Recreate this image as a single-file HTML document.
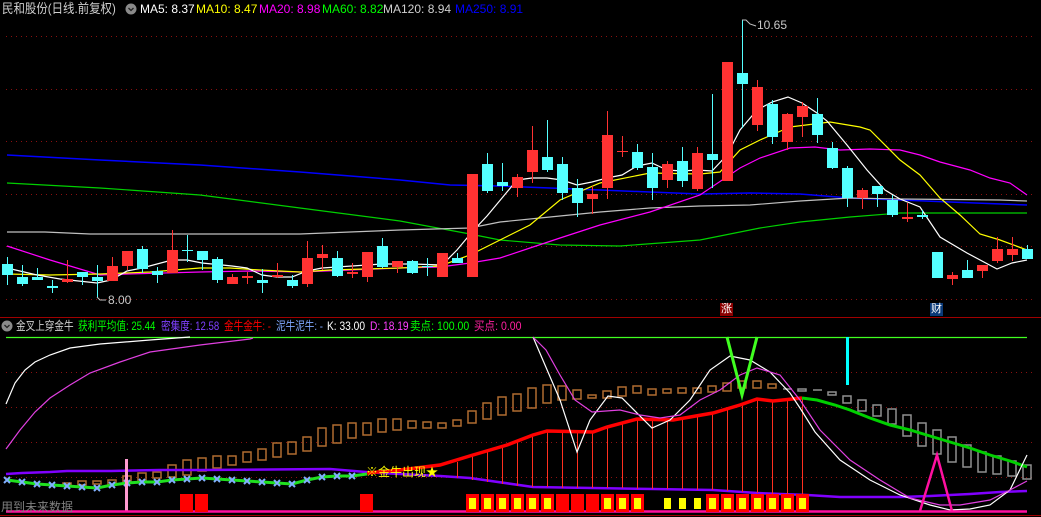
<!DOCTYPE html>
<html><head><meta charset="utf-8"><style>
html,body{margin:0;padding:0;background:#000;width:1041px;height:517px;overflow:hidden}
.t{position:absolute;font-family:"Liberation Sans","Noto Sans CJK SC",sans-serif;font-size:12px;line-height:14px;white-space:nowrap;transform-origin:0 0}
.s{transform:scaleX(0.8)}
</style></head><body>
<svg width="1041" height="517" style="position:absolute;left:0;top:0" xmlns="http://www.w3.org/2000/svg">
<g stroke="#8a1010" stroke-width="1" stroke-dasharray="1,4">
<line x1="6" y1="36.5" x2="1035" y2="36.5"/><line x1="6" y1="89.5" x2="1035" y2="89.5"/>
<line x1="6" y1="141.5" x2="1035" y2="141.5"/><line x1="6" y1="194.5" x2="1035" y2="194.5"/>
<line x1="6" y1="246.5" x2="1035" y2="246.5"/><line x1="6" y1="299.5" x2="1035" y2="299.5"/>
<line x1="6" y1="372.5" x2="1035" y2="372.5"/><line x1="6" y1="407.5" x2="1035" y2="407.5"/>
<line x1="6" y1="442.5" x2="1035" y2="442.5"/><line x1="6" y1="477.5" x2="1035" y2="477.5"/>
</g>
<line x1="0" y1="317.5" x2="1041" y2="317.5" stroke="#a00000"/>
<line x1="0" y1="515.5" x2="1041" y2="515.5" stroke="#a00000"/>
<polyline fill="none" stroke="#0000ff" stroke-width="1.5" points="7,155 100,160 200,165 300,172 400,180 450,185 500,186 550,188 600,190 650,192 700,194 750,193 800,194 850,198 900,200 950,202 1027,205"/>
<polyline fill="none" stroke="#00d000" stroke-width="1.2" points="7,183 100,188 200,195 300,208 400,221 470,234 500,240 560,245 620,246 700,240 760,228 800,222 850,217 900,213 950,213 1027,213"/>
<polyline fill="none" stroke="#c0c0c0" stroke-width="1.2" points="7,232 45,232 90,234 300,234 350,232 400,230 470,228 500,222 550,217 600,212 650,208 700,206 750,205 800,201 850,198 900,199 1000,200 1027,201"/>
<polyline fill="none" stroke="#ff00ff" stroke-width="1.2" points="7,246 50,260 100,275 127,274 200,272 250,271 300,272 350,270 400,268 440,267 470,263 500,258 530,248 560,238 600,225 650,212 700,195 740,168 760,158 790,148 815,147 840,150 870,149 900,150 920,155 940,162 970,170 990,178 1010,183 1027,195"/>
<polyline fill="none" stroke="#ffff00" stroke-width="1.2" points="7,274 50,275 100,274 150,272 200,268 230,268 260,270 300,272 330,270 400,268 440,266 470,255 500,240 530,225 560,200 600,183 650,173 700,174 720,172 740,150 760,140 790,127 830,122 860,127 870,130 900,160 920,175 940,198 960,215 980,234 1000,240 1027,250"/>
<polyline fill="none" stroke="#ffffff" stroke-width="1.2" points="7,268 37,275 60,279 97,283 111,280 127,271 142,268 172,260 187,260 202,263 232,266 247,268 262,275 277,277 292,277 307,271 322,268 352,266 367,265 382,264 412,264 442,265 457,250 472,232 487,216 502,198 517,180 532,178 547,178 562,180 577,185 592,182 607,178 622,175 637,166 652,163 667,170 682,171 697,170 712,171 727,155 740,130 757,110 772,102 788,97 802,103 817,113 827,121 847,145 867,170 885,190 900,199 920,207 940,237 967,253 997,269 1012,263 1027,260"/>
<g fill="#ff3232" stroke="#ff3232">
<line x1="67.5" y1="260" x2="67.5" y2="283"/><rect x="62" y="279" width="11" height="3" stroke="none"/>
<line x1="112.5" y1="257" x2="112.5" y2="281"/><rect x="107" y="266" width="11" height="15" stroke="none"/>
<line x1="127.5" y1="251" x2="127.5" y2="270"/><rect x="122" y="251" width="11" height="15" stroke="none"/>
<line x1="172.5" y1="230" x2="172.5" y2="273"/><rect x="167" y="250" width="11" height="23" stroke="none"/>
<line x1="232.5" y1="274" x2="232.5" y2="284"/><rect x="227" y="277" width="11" height="7" stroke="none"/>
<line x1="247.5" y1="272" x2="247.5" y2="284"/><rect x="242" y="276" width="11" height="2" stroke="none"/>
<line x1="277.5" y1="263" x2="277.5" y2="278"/><rect x="272" y="275" width="11" height="2" stroke="none"/>
<line x1="307.5" y1="241" x2="307.5" y2="287"/><rect x="302" y="258" width="11" height="26" stroke="none"/>
<line x1="322.5" y1="245" x2="322.5" y2="270"/><rect x="317" y="254" width="11" height="4" stroke="none"/>
<line x1="352.5" y1="263" x2="352.5" y2="278"/><rect x="347" y="272" width="11" height="2" stroke="none"/>
<line x1="367.5" y1="252" x2="367.5" y2="282"/><rect x="362" y="252" width="11" height="25" stroke="none"/>
<line x1="397.5" y1="261" x2="397.5" y2="273"/><rect x="392" y="261" width="11" height="6" stroke="none"/>
<line x1="442.5" y1="253" x2="442.5" y2="277"/><rect x="437" y="253" width="11" height="24" stroke="none"/>
<rect x="467" y="174" width="11" height="103" stroke="none"/>
<line x1="517.5" y1="174" x2="517.5" y2="197"/><rect x="512" y="177" width="11" height="11" stroke="none"/>
<line x1="532.5" y1="126" x2="532.5" y2="183"/><rect x="527" y="150" width="11" height="22" stroke="none"/>
<line x1="592.5" y1="186" x2="592.5" y2="214"/><rect x="587" y="194" width="11" height="5" stroke="none"/>
<line x1="607.5" y1="111" x2="607.5" y2="199"/><rect x="602" y="135" width="11" height="53" stroke="none"/>
<line x1="622.5" y1="136" x2="622.5" y2="157"/><rect x="617" y="151" width="11" height="1" stroke="none"/>
<line x1="667.5" y1="161" x2="667.5" y2="188"/><rect x="662" y="164" width="11" height="16" stroke="none"/>
<line x1="697.5" y1="147" x2="697.5" y2="191"/><rect x="692" y="153" width="11" height="36" stroke="none"/>
<rect x="722" y="62" width="11" height="119" stroke="none"/>
<line x1="757.5" y1="80" x2="757.5" y2="131"/><rect x="752" y="87" width="11" height="38" stroke="none"/>
<line x1="787.5" y1="113" x2="787.5" y2="150"/><rect x="782" y="114" width="11" height="28" stroke="none"/>
<line x1="802.5" y1="102" x2="802.5" y2="137"/><rect x="797" y="106" width="11" height="11" stroke="none"/>
<line x1="862.5" y1="188" x2="862.5" y2="209"/><rect x="857" y="190" width="11" height="8" stroke="none"/>
<line x1="907.5" y1="203" x2="907.5" y2="222"/><rect x="902" y="217" width="11" height="2" stroke="none"/>
<line x1="952.5" y1="272" x2="952.5" y2="285"/><rect x="947" y="275" width="11" height="4" stroke="none"/>
<line x1="982.5" y1="265" x2="982.5" y2="278"/><rect x="977" y="265" width="11" height="6" stroke="none"/>
<line x1="997.5" y1="237" x2="997.5" y2="263"/><rect x="992" y="249" width="11" height="12" stroke="none"/>
<line x1="1012.5" y1="237" x2="1012.5" y2="261"/><rect x="1007" y="249" width="11" height="6" stroke="none"/>
</g>
<g fill="#54ffff" stroke="#54ffff">
<line x1="7.5" y1="257" x2="7.5" y2="285"/><rect x="2" y="264" width="11" height="11" stroke="none"/>
<line x1="22.5" y1="265" x2="22.5" y2="286"/><rect x="17" y="277" width="11" height="7" stroke="none"/>
<line x1="37.5" y1="268" x2="37.5" y2="280"/><rect x="32" y="277" width="11" height="3" stroke="none"/>
<line x1="52.5" y1="280" x2="52.5" y2="293"/><rect x="47" y="286" width="11" height="2" stroke="none"/>
<line x1="82.5" y1="272" x2="82.5" y2="285"/><rect x="77" y="272" width="11" height="5" stroke="none"/>
<line x1="97.5" y1="265" x2="97.5" y2="298"/><rect x="92" y="277" width="11" height="4" stroke="none"/>
<line x1="142.5" y1="246" x2="142.5" y2="273"/><rect x="137" y="249" width="11" height="20" stroke="none"/>
<line x1="157.5" y1="267" x2="157.5" y2="283"/><rect x="152" y="271" width="11" height="4" stroke="none"/>
<line x1="187.5" y1="235" x2="187.5" y2="262"/><rect x="182" y="250" width="11" height="1" stroke="none"/>
<line x1="202.5" y1="251" x2="202.5" y2="270"/><rect x="197" y="251" width="11" height="9" stroke="none"/>
<line x1="217.5" y1="257" x2="217.5" y2="283"/><rect x="212" y="259" width="11" height="21" stroke="none"/>
<line x1="262.5" y1="269" x2="262.5" y2="293"/><rect x="257" y="280" width="11" height="3" stroke="none"/>
<line x1="292.5" y1="275" x2="292.5" y2="288"/><rect x="287" y="280" width="11" height="6" stroke="none"/>
<line x1="337.5" y1="251" x2="337.5" y2="277"/><rect x="332" y="258" width="11" height="18" stroke="none"/>
<line x1="382.5" y1="238" x2="382.5" y2="268"/><rect x="377" y="246" width="11" height="21" stroke="none"/>
<line x1="412.5" y1="260" x2="412.5" y2="274"/><rect x="407" y="261" width="11" height="12" stroke="none"/>
<line x1="427.5" y1="258" x2="427.5" y2="276"/><rect x="422" y="266" width="11" height="1" stroke="none"/>
<line x1="457.5" y1="253" x2="457.5" y2="263"/><rect x="452" y="258" width="11" height="5" stroke="none"/>
<line x1="487.5" y1="153" x2="487.5" y2="193"/><rect x="482" y="164" width="11" height="27" stroke="none"/>
<line x1="502.5" y1="163" x2="502.5" y2="191"/><rect x="497" y="182" width="11" height="4" stroke="none"/>
<line x1="547.5" y1="120" x2="547.5" y2="172"/><rect x="542" y="157" width="11" height="13" stroke="none"/>
<line x1="562.5" y1="157" x2="562.5" y2="200"/><rect x="557" y="164" width="11" height="29" stroke="none"/>
<line x1="577.5" y1="179" x2="577.5" y2="217"/><rect x="572" y="188" width="11" height="15" stroke="none"/>
<line x1="637.5" y1="144" x2="637.5" y2="170"/><rect x="632" y="152" width="11" height="16" stroke="none"/>
<line x1="652.5" y1="153" x2="652.5" y2="200"/><rect x="647" y="167" width="11" height="21" stroke="none"/>
<line x1="682.5" y1="147" x2="682.5" y2="187"/><rect x="677" y="161" width="11" height="20" stroke="none"/>
<line x1="712.5" y1="94" x2="712.5" y2="188"/><rect x="707" y="154" width="11" height="6" stroke="none"/>
<line x1="742.5" y1="20" x2="742.5" y2="128"/><rect x="737" y="73" width="11" height="11" stroke="none"/>
<line x1="772.5" y1="100" x2="772.5" y2="144"/><rect x="767" y="104" width="11" height="33" stroke="none"/>
<line x1="817.5" y1="98" x2="817.5" y2="143"/><rect x="812" y="114" width="11" height="21" stroke="none"/>
<line x1="832.5" y1="142" x2="832.5" y2="169"/><rect x="827" y="148" width="11" height="20" stroke="none"/>
<line x1="847.5" y1="166" x2="847.5" y2="207"/><rect x="842" y="168" width="11" height="30" stroke="none"/>
<line x1="877.5" y1="186" x2="877.5" y2="207"/><rect x="872" y="186" width="11" height="8" stroke="none"/>
<line x1="892.5" y1="195" x2="892.5" y2="217"/><rect x="887" y="200" width="11" height="15" stroke="none"/>
<line x1="922.5" y1="210" x2="922.5" y2="219"/><rect x="917" y="215" width="11" height="2" stroke="none"/>
<line x1="937.5" y1="252" x2="937.5" y2="278"/><rect x="932" y="252" width="11" height="26" stroke="none"/>
<line x1="967.5" y1="260" x2="967.5" y2="278"/><rect x="962" y="270" width="11" height="8" stroke="none"/>
<line x1="1027.5" y1="245" x2="1027.5" y2="259"/><rect x="1022" y="249" width="11" height="10" stroke="none"/>
</g>
<polyline fill="none" stroke="#c0c0c0" points="742,20 746,20 750,24 756,26"/>
<polyline fill="none" stroke="#c0c0c0" points="97,297 100,300 106,300"/>
<rect x="720" y="303" width="13" height="13" fill="#8b0000"/>
<rect x="930" y="303" width="13" height="13" fill="#0a3a78"/>
<line x1="6" y1="337.5" x2="1027" y2="337.5" stroke="#40ff20" stroke-width="1.2"/>
<polyline fill="none" stroke="#ffffff" stroke-width="1.2" points="6,404 15,383 25,370 35,362 50,355 70,348 100,344 150,340 190,337"/>
<polyline fill="none" stroke="#e040e0" stroke-width="1.2" points="6,449 20,430 35,412 50,398 70,385 90,373 120,362 150,352 200,345 250,339 253,338"/>
<g fill="none" stroke="#b06c30" stroke-width="1.5">
<rect x="63" y="483" width="8" height="2"/><rect x="78" y="481" width="8" height="4"/><rect x="93" y="481" width="8" height="3"/><rect x="108" y="480" width="8" height="5"/><rect x="123" y="476" width="8" height="6"/><rect x="138" y="473" width="8" height="9"/><rect x="153" y="472" width="8" height="6"/><rect x="168" y="465" width="8" height="12"/><rect x="183" y="460" width="8" height="15"/><rect x="198" y="458" width="8" height="13"/><rect x="213" y="456" width="8" height="12"/><rect x="228" y="456" width="8" height="9"/><rect x="243" y="452" width="8" height="10"/><rect x="258" y="449" width="8" height="11"/><rect x="273" y="443" width="8" height="14"/><rect x="288" y="442" width="8" height="12"/><rect x="303" y="437" width="8" height="14"/><rect x="318" y="428" width="8" height="18"/><rect x="333" y="425" width="8" height="18"/><rect x="348" y="423" width="8" height="15"/><rect x="363" y="423" width="8" height="12"/><rect x="378" y="419" width="8" height="13"/><rect x="393" y="419" width="8" height="11"/><rect x="408" y="421" width="8" height="7"/><rect x="423" y="422" width="8" height="6"/><rect x="438" y="423" width="8" height="5"/><rect x="453" y="420" width="8" height="6"/><rect x="468" y="411" width="8" height="12"/><rect x="483" y="403" width="8" height="16"/><rect x="498" y="397" width="8" height="18"/><rect x="513" y="394" width="8" height="17"/><rect x="528" y="388" width="8" height="20"/><rect x="543" y="385" width="8" height="18"/><rect x="558" y="386" width="8" height="14"/><rect x="573" y="390" width="8" height="9"/><rect x="588" y="395" width="8" height="3"/><rect x="603" y="391" width="8" height="7"/><rect x="618" y="387" width="8" height="9"/><rect x="633" y="386" width="8" height="7"/><rect x="648" y="389" width="8" height="6"/><rect x="663" y="389" width="8" height="4"/><rect x="678" y="388" width="8" height="5"/><rect x="693" y="388" width="8" height="5"/><rect x="708" y="386" width="8" height="6"/><rect x="723" y="383" width="8" height="8"/><rect x="738" y="381" width="8" height="7"/><rect x="753" y="381" width="8" height="7"/><rect x="768" y="384" width="8" height="4"/>
</g>
<g fill="none" stroke="#909090" stroke-width="1.5">
<line x1="783" y1="389" x2="792" y2="389"/><rect x="798" y="389" width="8" height="2"/><line x1="813" y1="390" x2="822" y2="390"/><rect x="828" y="392" width="8" height="3"/><rect x="843" y="396" width="8" height="7"/><rect x="858" y="400" width="8" height="11"/><rect x="873" y="405" width="8" height="11"/><rect x="888" y="409" width="8" height="15"/><rect x="903" y="415" width="8" height="21"/><rect x="918" y="423" width="8" height="23"/><rect x="933" y="430" width="8" height="24"/><rect x="948" y="437" width="8" height="25"/><rect x="963" y="445" width="8" height="22"/><rect x="978" y="452" width="8" height="20"/><rect x="993" y="456" width="8" height="18"/><rect x="1008" y="461" width="8" height="15"/><rect x="1023" y="465" width="8" height="14"/>
</g>
<polyline fill="none" stroke="#8000ff" stroke-width="2.5" points="6,474 22,473 50,472 67,471 111,471 160,470 200,470 330,469 366,472 380,473 440,476 470,478 533,487 653,489 713,490 757,493 807,495 840,497 900,497 930,496 970,494 1000,492 1027,491"/>
<g stroke="#ff3020" stroke-width="1">
<line x1="457.5" y1="462" x2="457.5" y2="478"/><line x1="472.5" y1="455" x2="472.5" y2="480"/><line x1="487.5" y1="451" x2="487.5" y2="482"/><line x1="502.5" y1="446" x2="502.5" y2="484"/><line x1="517.5" y1="441" x2="517.5" y2="486"/><line x1="532.5" y1="435" x2="532.5" y2="487"/><line x1="547.5" y1="431" x2="547.5" y2="487"/><line x1="562.5" y1="431" x2="562.5" y2="488"/><line x1="577.5" y1="432" x2="577.5" y2="488"/><line x1="592.5" y1="432" x2="592.5" y2="488"/><line x1="607.5" y1="427" x2="607.5" y2="488"/><line x1="622.5" y1="423" x2="622.5" y2="488"/><line x1="637.5" y1="419" x2="637.5" y2="489"/><line x1="652.5" y1="419" x2="652.5" y2="489"/><line x1="667.5" y1="420" x2="667.5" y2="489"/><line x1="682.5" y1="419" x2="682.5" y2="489"/><line x1="697.5" y1="417" x2="697.5" y2="490"/><line x1="712.5" y1="413" x2="712.5" y2="490"/><line x1="727.5" y1="409" x2="727.5" y2="491"/><line x1="742.5" y1="404" x2="742.5" y2="492"/><line x1="757.5" y1="399" x2="757.5" y2="493"/><line x1="772.5" y1="401" x2="772.5" y2="494"/><line x1="787.5" y1="399" x2="787.5" y2="494"/><line x1="802.5" y1="398" x2="802.5" y2="495"/>
</g>
<polyline fill="none" stroke="#ff0000" stroke-width="3.5" points="367,473 400,470 440,465 473,455 507,445 533,435 547,431 593,432 607,427 637,419 673,420 713,413 740,405 757,399 773,401 802,398"/>
<polyline fill="none" stroke="#00d000" stroke-width="3" points="802,398 817,400 835,405 850,410 870,418 890,425 910,430 930,436 950,442 970,448 990,455 1010,461 1027,467"/>
<polyline fill="none" stroke="#20e020" stroke-width="3" points="7,480 22,482 37,484 52,485 67,486 82,487 97,488 112,485 127,483 142,482 157,482 172,480 187,479 202,478 217,479 232,480 247,481 262,482 277,483 292,484 307,480 322,477 337,476 352,476 367,474"/>
<g stroke="#80b0ff" stroke-width="2">
<path d="M4,477l6,6M10,477l-6,6 M19,479l6,6M25,479l-6,6 M34,481l6,6M40,481l-6,6 M49,482l6,6M55,482l-6,6 M64,483l6,6M70,483l-6,6 M79,484l6,6M85,484l-6,6 M94,485l6,6M100,485l-6,6 M109,482l6,6M115,482l-6,6 M124,480l6,6M130,480l-6,6 M139,479l6,6M145,479l-6,6 M154,479l6,6M160,479l-6,6 M169,477l6,6M175,477l-6,6 M184,476l6,6M190,476l-6,6 M199,475l6,6M205,475l-6,6 M214,476l6,6M220,476l-6,6 M229,477l6,6M235,477l-6,6 M244,478l6,6M250,478l-6,6 M259,479l6,6M265,479l-6,6 M274,480l6,6M280,480l-6,6 M289,481l6,6M295,481l-6,6 M304,477l6,6M310,477l-6,6 M319,474l6,6M325,474l-6,6 M334,473l6,6M340,473l-6,6 M349,473l6,6M355,473l-6,6"/>
</g>
<rect x="125" y="459" width="3" height="53" fill="#ff9ad0"/>
<polyline fill="none" stroke="#ffffff" stroke-width="1.2" points="533,337 560,400 577,452 590,420 608,396 622,398 652,428 670,420 690,400 710,370 730,356 750,360 770,372 790,393 800,408 815,432 840,460 870,480 900,495 930,505 950,510 970,509 990,505 1010,490 1027,455"/>
<polyline fill="none" stroke="#e040e0" stroke-width="1.2" points="533,337 546,350 560,375 575,400 592,412 620,410 640,415 660,418 680,415 700,400 720,390 740,375 757,368 780,375 800,400 820,430 850,460 880,480 910,498 940,505 960,505 990,500 1010,490 1027,481"/>
<polyline fill="none" stroke="#40ff20" stroke-width="3" points="727,337 742,395 757,337"/>
<rect x="846" y="337" width="3" height="48" fill="#00ffff"/>
<line x1="6" y1="511.5" x2="1027" y2="511.5" stroke="#ff10a0" stroke-width="2.5"/>
<polyline fill="none" stroke="#ff10a0" stroke-width="2.5" points="920,511 937,455 952,511"/>
<g fill="#ff0000">
<rect x="180" y="494" width="13" height="18"/><rect x="195" y="494" width="13" height="18"/><rect x="360" y="494" width="13" height="18"/>
<rect x="466" y="494" width="13" height="18"/><rect x="481" y="494" width="13" height="18"/><rect x="496" y="494" width="13" height="18"/><rect x="511" y="494" width="13" height="18"/><rect x="526" y="494" width="13" height="18"/><rect x="541" y="494" width="13" height="18"/><rect x="556" y="494" width="13" height="18"/><rect x="571" y="494" width="13" height="18"/><rect x="586" y="494" width="13" height="18"/><rect x="601" y="494" width="13" height="18"/><rect x="616" y="494" width="13" height="18"/><rect x="631" y="494" width="13" height="18"/><rect x="706" y="494" width="13" height="18"/><rect x="721" y="494" width="13" height="18"/><rect x="736" y="494" width="13" height="18"/><rect x="751" y="494" width="13" height="18"/><rect x="766" y="494" width="13" height="18"/><rect x="781" y="494" width="13" height="18"/><rect x="796" y="494" width="13" height="18"/>
</g>
<g fill="#ffff00">
<rect x="469" y="498" width="7" height="11"/><rect x="484" y="498" width="7" height="11"/><rect x="499" y="498" width="7" height="11"/><rect x="514" y="498" width="7" height="11"/><rect x="529" y="498" width="7" height="11"/><rect x="544" y="498" width="7" height="11"/><rect x="604" y="498" width="7" height="11"/><rect x="619" y="498" width="7" height="11"/><rect x="634" y="498" width="7" height="11"/><rect x="664" y="498" width="7" height="11"/><rect x="679" y="498" width="7" height="11"/><rect x="694" y="498" width="7" height="11"/><rect x="709" y="498" width="7" height="11"/><rect x="724" y="498" width="7" height="11"/><rect x="739" y="498" width="7" height="11"/><rect x="754" y="498" width="7" height="11"/><rect x="769" y="498" width="7" height="11"/><rect x="784" y="498" width="7" height="11"/><rect x="799" y="498" width="7" height="11"/>
</g>
<circle cx="131" cy="9" r="5.5" fill="#8a8a8a"/><path d="M128.5,8 l2.5,2.5 l2.5,-2.5" stroke="#222" stroke-width="1.3" fill="none"/>
<circle cx="7" cy="326" r="5.5" fill="#8a8a8a"/><path d="M4.5,325 l2.5,2.5 l2.5,-2.5" stroke="#222" stroke-width="1.3" fill="none"/>
</svg>
<div class="t" style="left:2px;top:2px;color:#d0d0d0;font-size:13px;transform:scaleX(0.88)">民和股份(日线.前复权)</div>
<div class="t" style="left:140px;top:2px;color:#fff">MA5: 8.37</div>
<div class="t" style="left:196px;top:2px;color:#ffff00">MA10: 8.47</div>
<div class="t" style="left:259px;top:2px;color:#ff00ff">MA20: 8.98</div>
<div class="t" style="left:322px;top:2px;color:#00ff00">MA60: 8.82</div>
<div class="t" style="left:383px;top:2px;color:#d0d0d0">MA120: 8.94</div>
<div class="t" style="left:455px;top:2px;color:#0000ff">MA250: 8.91</div>
<div class="t" style="left:757px;top:18px;color:#c8c8c8">10.65</div>
<div class="t" style="left:108px;top:293px;color:#c8c8c8">8.00</div>
<div class="t" style="left:720px;top:302px;color:#fff;width:13px;text-align:center;font-size:11px">涨</div>
<div class="t" style="left:930px;top:302px;color:#fff;width:13px;text-align:center;font-size:11px">财</div>
<div class="t s" style="left:16px;top:319px;color:#d0d0d0">金叉上穿金牛</div>
<div class="t s" style="left:78px;top:319px;color:#00ff00">获利平均值: 25.44</div>
<div class="t s" style="left:161px;top:319px;color:#8040ff">密集度: 12.58</div>
<div class="t s" style="left:224px;top:319px;color:#ff0000">金牛金牛: -</div>
<div class="t s" style="left:276px;top:319px;color:#80a8ff">泥牛泥牛: -</div>
<div class="t" style="left:327px;top:319px;color:#fff;transform:scaleX(0.85)">K: 33.00</div>
<div class="t" style="left:370px;top:319px;color:#ff40ff;transform:scaleX(0.85)">D: 18.19</div>
<div class="t" style="left:410px;top:319px;color:#00ff00;transform:scaleX(0.88)">卖点: 100.00</div>
<div class="t" style="left:474px;top:319px;color:#ff20a0;transform:scaleX(0.88)">买点: 0.00</div>
<div class="t" style="left:366px;top:465px;color:#ffff00">※金牛出现★</div>
<div class="t" style="left:1px;top:500px;color:#808080">用到未来数据</div>
</body></html>
